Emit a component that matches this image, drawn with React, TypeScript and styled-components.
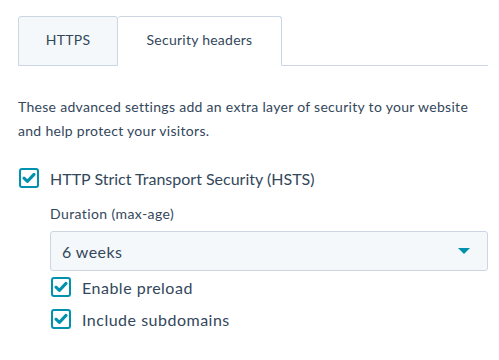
import React, { useState } from "react";
import styled, { createGlobalStyle } from "styled-components";

const GlobalStyle = createGlobalStyle`
  html, body {
    margin: 0;
    padding: 0;
    background: #ffffff;
  }
  body {
    font-family: Lato, "Open Sans", sans-serif;
    color: #33475b;
  }
`;

type CheckProps = {
  checked: boolean;
  onToggle: () => void;
  label: string;
  big?: boolean;
};

const Check = ({ checked, onToggle, label, big }: CheckProps): JSX.Element => (
  <CheckRow $big={big} onClick={onToggle}>
    <Box>
      {checked && (
        <svg width="14" height="12" viewBox="0 0 14 12">
          <path d="M2 6.2 L5.4 9.4 L12 2.4" fill="none" stroke="#0091ae" strokeWidth="3" strokeLinecap="round" strokeLinejoin="round" />
        </svg>
      )}
    </Box>
    <CheckLabel $big={big}>{label}</CheckLabel>
  </CheckRow>
);

export default function App(): JSX.Element {
  const [tab, setTab] = useState(1);
  const [hsts, setHsts] = useState(true);
  const [preload, setPreload] = useState(true);
  const [subs, setSubs] = useState(true);

  return (
    <Page>
      <GlobalStyle />
      <Tabs>
        <Tab $active={tab === 0} $width={100} onClick={() => setTab(0)}>
          HTTPS
        </Tab>
        <Tab $active={tab === 1} $width={164} onClick={() => setTab(1)}>
          Security headers
        </Tab>
        <TabFill />
      </Tabs>
      <Intro>
        These advanced settings add an extra layer of security to your website and help protect your visitors.
      </Intro>
      <Check big checked={hsts} onToggle={() => setHsts(!hsts)} label="HTTP Strict Transport Security (HSTS)" />
      <Nested>
        <FieldLabel>Duration (max-age)</FieldLabel>
        <Select>
          <span>6 weeks</span>
          <Caret />
        </Select>
        <Check checked={preload} onToggle={() => setPreload(!preload)} label="Enable preload" />
        <Check checked={subs} onToggle={() => setSubs(!subs)} label="Include subdomains" />
      </Nested>
    </Page>
  );
}

const Page = styled.div`
  width: 499px;
  height: 360px;
  padding: 16px 11px 0 18px;
  box-sizing: border-box;
`;
const Tabs = styled.div`
  display: flex;
  height: 50px;
`;
const Tab = styled.div<{ $active?: boolean; $width: number }>`
  box-sizing: border-box;
  width: ${(p) => p.$width}px;
  display: flex;
  align-items: center;
  justify-content: center;
  padding-bottom: 3px;
  font-size: 14px;
  letter-spacing: 0.25px;
  color: #33475b;
  cursor: pointer;
  border: 1px solid #cbd6e2;
  border-left: ${(p) => (p.$active ? "none" : "1px solid #cbd6e2")};
  border-bottom: ${(p) => (p.$active ? "1px solid transparent" : "1px solid #cbd6e2")};
  background: ${(p) => (p.$active ? "#ffffff" : "#f5f8fa")};
  border-radius: 3px 3px 0 0;
`;
const TabFill = styled.div`
  flex: 1;
  border-bottom: 1px solid #cbd6e2;
`;
const Intro = styled.p`
  margin: 29px 0 0;
  font-size: 14px;
  line-height: 24px;
  letter-spacing: 0.3px;
  color: #33475b;
`;
const CheckRow = styled.label<{ $big?: boolean }>`
  display: flex;
  align-items: center;
  gap: 11px;
  margin-top: ${(p) => (p.$big ? "25px" : "12px")};
  margin-left: 1px;
  height: 20px;
  cursor: pointer;
`;
const Box = styled.span`
  box-sizing: border-box;
  width: 20px;
  height: 20px;
  border: 2px solid #0091ae;
  border-radius: 3px;
  display: flex;
  align-items: center;
  justify-content: center;
  background: #ffffff;
`;
const CheckLabel = styled.span<{ $big?: boolean }>`
  font-size: 16px;
  letter-spacing: ${(p) => (p.$big ? "0" : "0.5px")};
  color: #33475b;
`;
const Nested = styled.div`
  margin-left: 32px;
  margin-top: 16px;

  & > label:nth-of-type(1) {
    margin-top: 6px;
  }
`;
const FieldLabel = styled.div`
  font-size: 14px;
  line-height: 20px;
  letter-spacing: 0.4px;
  color: #33475b;
`;
const Select = styled.div`
  box-sizing: border-box;
  margin-top: 7px;
  height: 40px;
  display: flex;
  align-items: center;
  justify-content: space-between;
  padding: 0 17px 0 11px;
  background: #f5f8fa;
  border: 1px solid #cbd6e2;
  border-radius: 3px;
  font-size: 16px;
  letter-spacing: 0.4px;
  color: #33475b;
`;
const Caret = styled.span`
  width: 0;
  height: 0;
  border-left: 6px solid transparent;
  border-right: 6px solid transparent;
  border-top: 6px solid #0091ae;
`;
